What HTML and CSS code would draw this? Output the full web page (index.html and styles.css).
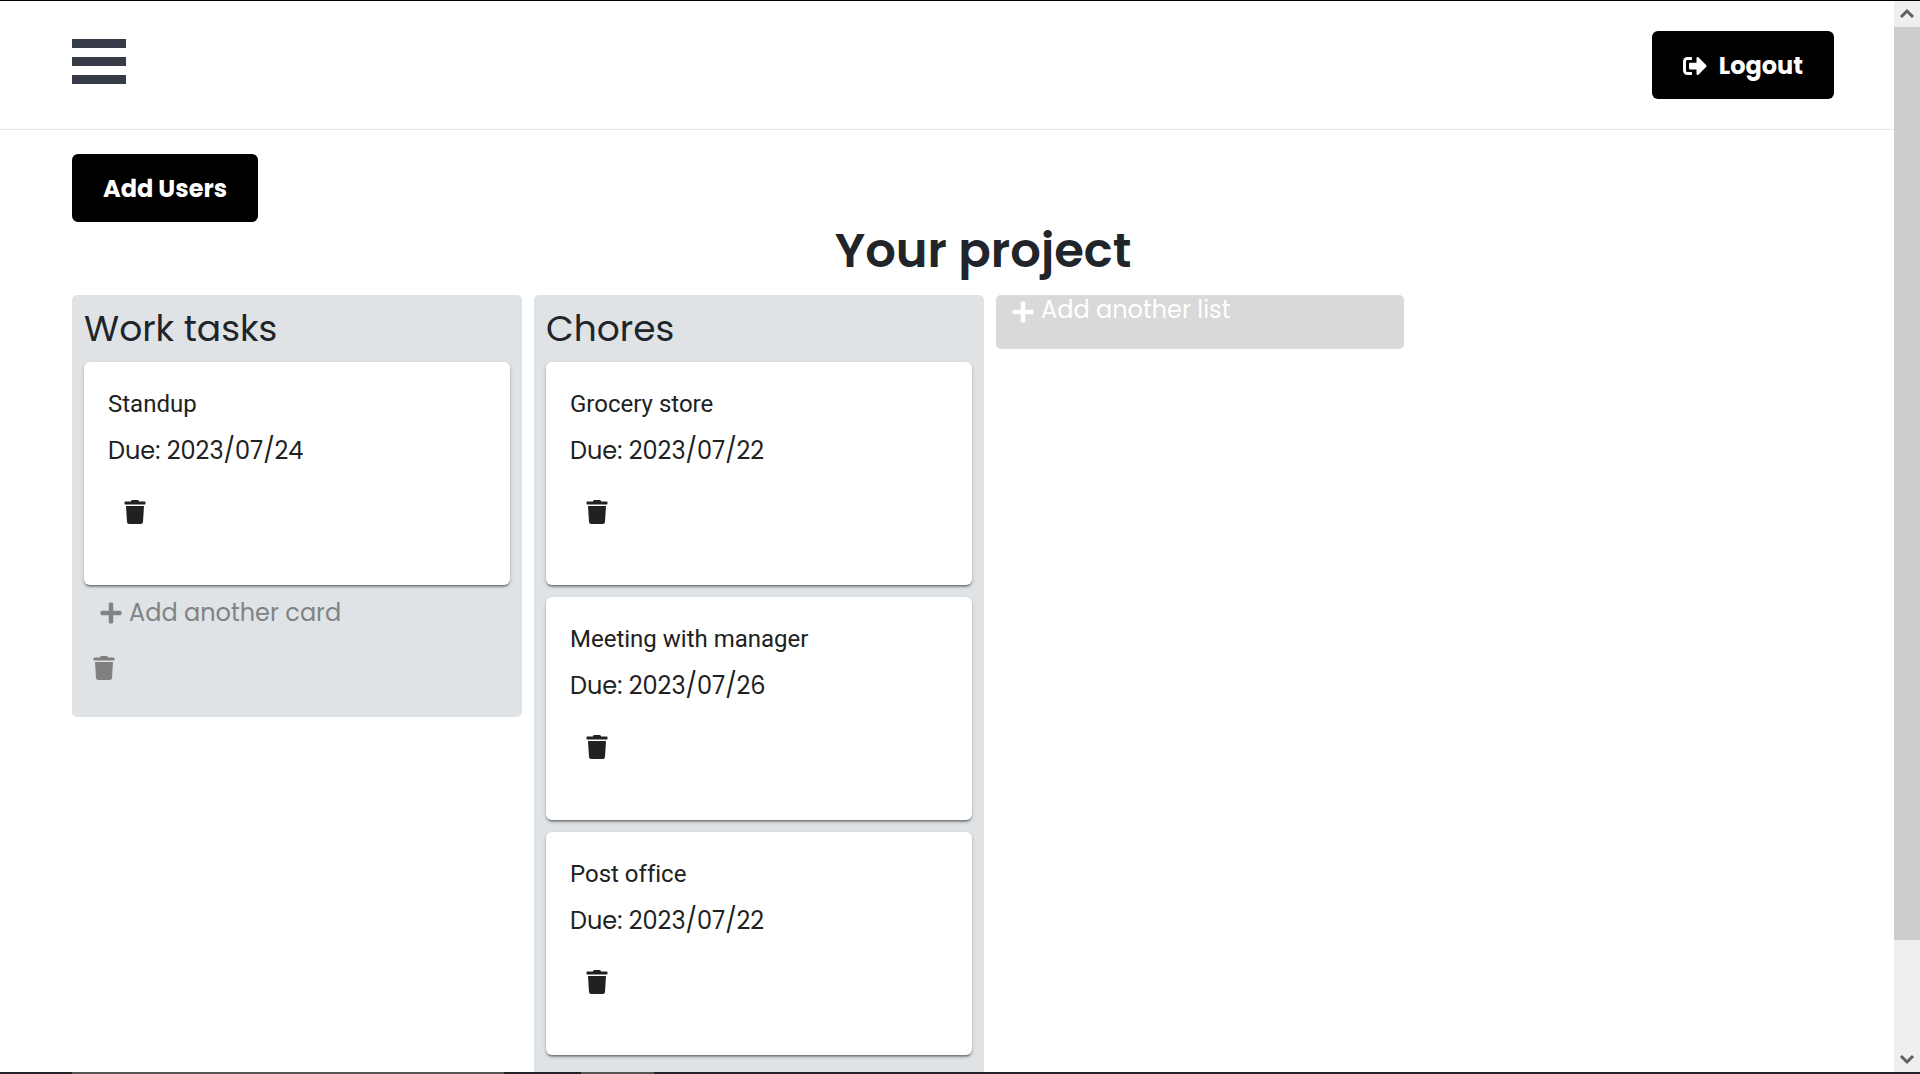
FILE: index.html
```html
<!DOCTYPE html>
<html lang="en">
<head>
<meta charset="utf-8">
<meta name="viewport" content="width=device-width, initial-scale=1">
<title>Your project</title>
<link rel="stylesheet" href="styles.css">
</head>
<body>
<svg class="sprite" aria-hidden="true">
  <symbol id="trash" viewBox="0 0 448 512"><path d="M432 32H312l-9.400-18.700A24 24 0 0 0 281.100 0H166.800a23.700 23.700 0 0 0-21.400 13.300L136 32H16A16 16 0 0 0 0 48v32a16 16 0 0 0 16 16h416a16 16 0 0 0 16-16V48a16 16 0 0 0-16-16zM53.200 467a48 48 0 0 0 47.900 45h245.800a48 48 0 0 0 47.900-45L416 128H32z"/></symbol>
  <symbol id="plus" viewBox="0 0 448 512"><path d="M416 208H272V64c0-17.670-14.330-32-32-32h-32c-17.670 0-32 14.330-32 32v144H32c-17.670 0-32 14.330-32 32v32c0 17.670 14.330 32 32 32h144v144c0 17.670 14.330 32 32 32h32c17.670 0 32-14.330 32-32V304h144c17.670 0 32-14.330 32-32v-32c0-17.670-14.330-32-32-32z"/></symbol>
  <symbol id="logout" viewBox="0 0 512 512"><path d="M497 273L329 441c-15 15-41 4.500-41-17v-96H152c-13.300 0-24-10.700-24-24v-96c0-13.300 10.700-24 24-24h136V88c0-21.400 25.900-32 41-17l168 168c9.300 9.400 9.300 24.600 0 34zM192 436v-40c0-6.600-5.400-12-12-12H96c-17.700 0-32-14.300-32-32V160c0-17.700 14.300-32 32-32h84c6.600 0 12-5.400 12-12V76c0-6.600-5.400-12-12-12H96c-53 0-96 43-96 96v192c0 53 43 96 96 96h84c6.600 0 12-5.400 12-12z"/></symbol>
</svg>
<div class="window">
  <div class="page">
    <header class="topbar">
      <button class="menu" aria-label="Menu"><span></span><span></span><span></span></button>
      <button class="button"><svg class="icon-logout"><use href="#logout"/></svg>Logout</button>
    </header>
    <main class="project">
      <button class="button">Add Users</button>
      <h1>Your project</h1>
      <div class="board">
        <section class="list">
          <h2>Work tasks</h2>
          <article class="card">
            <h3>Standup</h3>
            <p>Due: 2023/07/24</p>
            <button class="icon-button" aria-label="Delete card"><svg class="icon"><use href="#trash"/></svg></button>
          </article>
          <button class="add add-card"><svg class="icon"><use href="#plus"/></svg>Add another card</button>
          <button class="icon-button delete-list" aria-label="Delete list"><svg class="icon"><use href="#trash"/></svg></button>
        </section>
        <section class="list">
          <h2>Chores</h2>
          <article class="card">
            <h3>Grocery store</h3>
            <p>Due: 2023/07/22</p>
            <button class="icon-button" aria-label="Delete card"><svg class="icon"><use href="#trash"/></svg></button>
          </article>
          <article class="card">
            <h3>Meeting with manager</h3>
            <p>Due: 2023/07/26</p>
            <button class="icon-button" aria-label="Delete card"><svg class="icon"><use href="#trash"/></svg></button>
          </article>
          <article class="card">
            <h3>Post office</h3>
            <p>Due: 2023/07/22</p>
            <button class="icon-button" aria-label="Delete card"><svg class="icon"><use href="#trash"/></svg></button>
          </article>
          <div class="list-end"></div>
        </section>
        <button class="add add-list"><svg class="icon"><use href="#plus"/></svg>Add another list</button>
      </div>
    </main>
  </div>
  <div class="scrollbar" aria-hidden="true">
    <svg class="arrow" viewBox="0 0 26 26"><path d="M7 16l6-6 6 6"/></svg>
    <div class="track"><div class="thumb"></div></div>
    <svg class="arrow" viewBox="0 0 26 26"><path d="M7 10l6 6 6-6"/></svg>
  </div>
</div>
<div class="taskbar" aria-hidden="true"><span class="task task-wide"></span><span class="task"></span></div>
</body>
</html>
```
FILE: styles.css
```css
* { box-sizing: border-box; }

body {
  display: flex;
  flex-direction: column;
  height: 100vh;
  margin: 0;
  overflow: hidden;
  border-top: 1px solid #000;
  background: #fff;
  color: #212529;
  font: 24px/36px Poppins, Inter, sans-serif;
}

h1, h2, h3, p { margin: 0; }

button {
  margin: 0;
  padding: 0;
  border: 0;
  background: none;
  color: inherit;
  font: inherit;
  cursor: pointer;
}

svg { display: block; fill: currentColor; }

.sprite { position: absolute; width: 0; height: 0; }

.window {
  display: grid;
  grid-template-columns: 1fr 26px;
  flex: 1;
  min-height: 0;
}

.page { min-width: 0; overflow: hidden; }

.topbar {
  display: flex;
  justify-content: space-between;
  align-items: flex-start;
  padding: 30px 60px 30px 72px;
  border-bottom: 1px solid #e5e5e5;
}

.menu {
  display: flex;
  flex-direction: column;
  gap: 9px;
  width: 54px;
  padding-top: 8px;
}

.menu span { height: 9px; background: #373a47; }

.button {
  display: flex;
  align-items: center;
  gap: 12px;
  padding: 17px 31px 15px;
  border-radius: 6px;
  background: #000;
  color: #fff;
  font-weight: 700;
}

.icon-logout { width: 24px; height: 24px; }

.project { padding: 24px 0 0 72px; }

h1 {
  padding: 0 0 15px;
  font-size: 48px;
  line-height: 58px;
  font-weight: 600;
  text-align: center;
}

.board {
  display: flex;
  align-items: flex-start;
  gap: 12px;
}

.list {
  display: flex;
  flex-direction: column;
  align-items: flex-start;
  gap: 12px;
  width: 450px;
  padding: 12px;
  border-radius: 5px;
  background: #dfe3e6;
}

.list-end { height: 120px; }

h2 {
  font-size: 36px;
  line-height: 43px;
  font-weight: 400;
}

.card {
  width: 100%;
  padding: 24px 24px 43px;
  border-radius: 6px;
  background: #fff;
  box-shadow: 0 3px 2px -2px rgba(0, 0, 0, .3), 0 2px 2px rgba(0, 0, 0, .2), 0 2px 4px rgba(0, 0, 0, .15);
  color: #212121;
}

.card h3 {
  font: 400 24px/36px Roboto, sans-serif;
  font-variant-ligatures: none;
}

.card p { padding: 11px 0 13px; }

.icon { width: 22px; height: 24px; }

.icon-button { padding: 18px 16px; }

.add {
  display: flex;
  align-items: center;
  gap: 7px;
  padding: 0 16px;
}

.add-card { margin-top: -2px; color: #7f8384; }

.delete-list { margin: -5px 0 7px -7px; color: #808080; }

.add-list {
  align-items: flex-start;
  width: 408px;
  height: 54px;
  border-radius: 5px;
  background: #d9d9d9;
  color: #fff;
  line-height: 30px;
}

.add-list .icon { margin-top: 5px; }

.scrollbar {
  display: flex;
  flex-direction: column;
  background: #efefef;
}

.arrow {
  width: 26px;
  height: 26px;
  fill: none;
  stroke: #606060;
  stroke-width: 3px;
}

.track { flex: 1; }

.thumb { height: 89.600%; background: #cdcdcd; }

.taskbar {
  display: flex;
  gap: 77px;
  height: 2px;
  padding-left: 72px;
  background: #222226;
}

.task { width: 73px; background: #555; }

.task-wide { width: 432px; }
```
